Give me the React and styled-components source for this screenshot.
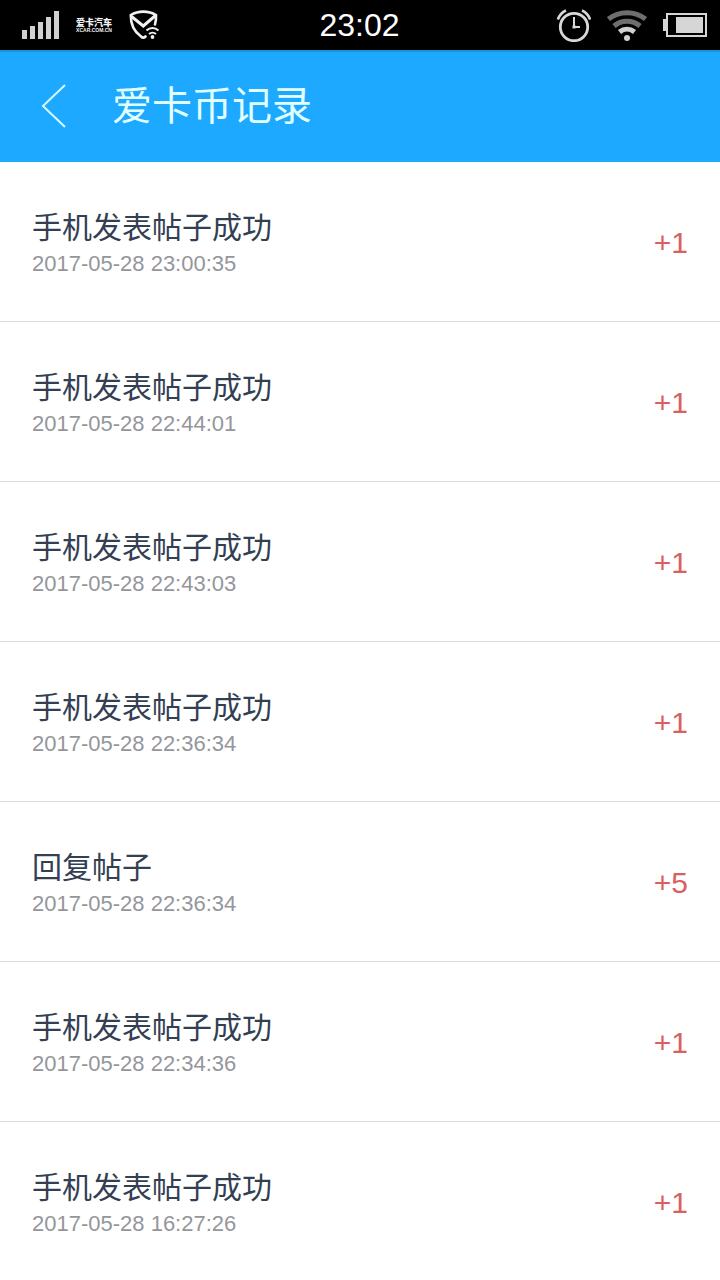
import React from "react"
import styled, { createGlobalStyle } from "styled-components"

const GlobalStyle = createGlobalStyle`
  * {
    box-sizing: border-box;
  }

  body {
    margin: 0;
    background-color: #fff;
    font-family: "Liberation Sans", "Noto Sans CJK SC", sans-serif;
  }
`

const Screen = styled.div`
  height: 100vh;
  overflow: hidden;
`

const StatusBar = styled.div`
  display: grid;
  grid-template-columns: 1fr auto 1fr;
  align-items: center;
  height: 50px;
  padding: 0 13px 0 22px;
  background-color: #000;
`

const StatusGroup = styled.div`
  display: flex;
  align-items: center;
  justify-content: ${({ $end }) => ($end ? "flex-end" : "flex-start")};
  gap: 16px;

  svg {
    display: block;
    flex: none;
  }
`

const Clock = styled.time`
  margin-right: 10px;
  color: #fff;
  font-size: 32px;
  line-height: 50px;
`

const Brand = styled.div`
  display: flex;
  flex-direction: column;
  align-items: center;
  width: 36px;
  color: #f4f4f4;
  font-weight: 700;
  white-space: nowrap;
`

const BrandName = styled.span`
  font-size: 9px;
  font-weight: 900;
  line-height: 10px;
`

const BrandUrl = styled.span`
  font-size: 5px;
  line-height: 5px;
`

const Header = styled.header`
  display: flex;
  align-items: center;
  height: 112px;
  padding: 0 32px;
  background: linear-gradient(#1888cc, #1da9ff 3px);
`

const BackButton = styled.button`
  width: 80px;
  height: 80px;
  padding: 0 8px;
  border: none;
  background: none;

  svg {
    display: block;
  }
`

const Title = styled.h1`
  margin: 0;
  color: #e2ffff;
  font-size: 40px;
  font-weight: 400;
  line-height: 56px;
`

const List = styled.ul`
  margin: 0;
  padding: 0;
  list-style: none;
`

const Row = styled.li`
  display: flex;
  align-items: center;
  justify-content: space-between;
  height: 160px;
  padding: 2px 32px 0;
  border-bottom: 1px solid #d9d9d9;
`

const RowTitle = styled.div`
  color: #333f52;
  font-size: 30px;
  line-height: 42px;
`

const RowDate = styled.time`
  display: block;
  color: #95969b;
  font-size: 22px;
  line-height: 30px;
`

const Amount = styled.span`
  color: #d9605f;
  font-size: 30px;
  line-height: 42px;
`

const records = [
  { title: "手机发表帖子成功", date: "2017-05-28 23:00:35", amount: "+1" },
  { title: "手机发表帖子成功", date: "2017-05-28 22:44:01", amount: "+1" },
  { title: "手机发表帖子成功", date: "2017-05-28 22:43:03", amount: "+1" },
  { title: "手机发表帖子成功", date: "2017-05-28 22:36:34", amount: "+1" },
  { title: "回复帖子", date: "2017-05-28 22:36:34", amount: "+5" },
  { title: "手机发表帖子成功", date: "2017-05-28 22:34:36", amount: "+1" },
  { title: "手机发表帖子成功", date: "2017-05-28 16:27:26", amount: "+1" },
]

const SignalIcon = () => (
  <svg width="38" height="28" viewBox="0 0 38 28" fill="#d0d0d0">
    <rect x="0" y="19" width="5" height="9" />
    <rect x="8" y="15" width="5" height="13" />
    <rect x="16" y="11" width="5" height="17" />
    <rect x="24" y="6" width="5" height="22" />
    <rect x="32" y="0" width="5" height="28" />
  </svg>
)

const ShieldIcon = () => (
  <svg width="32" height="30" viewBox="0 0 32 30" fill="none" stroke="#f2f2f2">
    <path
      d="M17.500 26.500c-1.500 1.600-3 1.500-4.500 0C6 21.500 2.600 14 2.800 5c4-2.400 8-3.400 12.500-3.400S24 2.600 28 5c.2 3.500-.2 6.500-1 9.500"
      strokeWidth="2.600"
      strokeLinecap="round"
    />
    <path d="M3.500 6.500l11.800 9.500L27.500 5.500" strokeWidth="3" />
    <path d="M18.500 20.500c3.500-3.200 8.500-3.200 12 0M21 24c2-1.800 5-1.800 7 0" strokeWidth="2" />
    <circle cx="24.500" cy="27" r="1.900" fill="#f2f2f2" stroke="none" />
  </svg>
)

const AlarmIcon = () => (
  <svg width="36" height="34" viewBox="0 0 36 34" fill="none" stroke="#d8d8d8">
    <circle cx="19" cy="19" r="13.700" strokeWidth="2.800" />
    <path d="M19 9v10h6" strokeWidth="2" />
    <path d="M17.500 17.500h3v3h-3z" fill="#d8d8d8" stroke="none" />
    <path d="M2.800 11.500C4.500 7 7 4.200 11 2.500M35.200 11.500C33.500 7 31 4.200 27 2.500" strokeWidth="2.600" />
  </svg>
)

const WifiIcon = () => (
  <svg width="40" height="32" viewBox="0 0 40 32" fill="none">
    <path d="M1.500 10C12 1.500 28 1.500 38.500 10" stroke="#6e6e6e" strokeWidth="5" />
    <path d="M7 17c7.500-6.500 18.500-6.500 26 0" stroke="#6e6e6e" strokeWidth="5" />
    <path d="M12.500 23c4.500-3.600 10.500-3.600 15 0" stroke="#d0d0d0" strokeWidth="5" />
    <circle cx="20" cy="29" r="3" fill="#d0d0d0" />
  </svg>
)

const BatteryIcon = () => (
  <svg width="44" height="24" viewBox="0 0 44 24">
    <rect x="0" y="6" width="4" height="12" fill="#d6d6d6" />
    <rect x="4" y="1" width="39" height="22" fill="none" stroke="#d6d6d6" strokeWidth="2" />
    <rect x="13" y="4" width="27" height="16" fill="#d6d6d6" />
  </svg>
)

const App = () => {
  return (
    <>
      <GlobalStyle />
      <Screen lang="zh-CN">
        <StatusBar>
          <StatusGroup>
            <SignalIcon />
            <Brand>
              <BrandName>爱卡汽车</BrandName>
              <BrandUrl>XCAR.COM.CN</BrandUrl>
            </Brand>
            <ShieldIcon />
          </StatusGroup>
          <Clock>23:02</Clock>
          <StatusGroup $end>
            <AlarmIcon />
            <WifiIcon />
            <BatteryIcon />
          </StatusGroup>
        </StatusBar>
        <Header>
          <BackButton aria-label="返回">
            <svg width="28" height="46" viewBox="0 0 28 46" fill="none">
              <path d="M25 2L3 23l22 21" stroke="#d5fbff" strokeWidth="2" />
            </svg>
          </BackButton>
          <Title>爱卡币记录</Title>
        </Header>
        <List>
          {records.map((record, index) => (
            <Row key={index}>
              <div>
                <RowTitle>{record.title}</RowTitle>
                <RowDate>{record.date}</RowDate>
              </div>
              <Amount>{record.amount}</Amount>
            </Row>
          ))}
        </List>
      </Screen>
    </>
  )
}

export default App
